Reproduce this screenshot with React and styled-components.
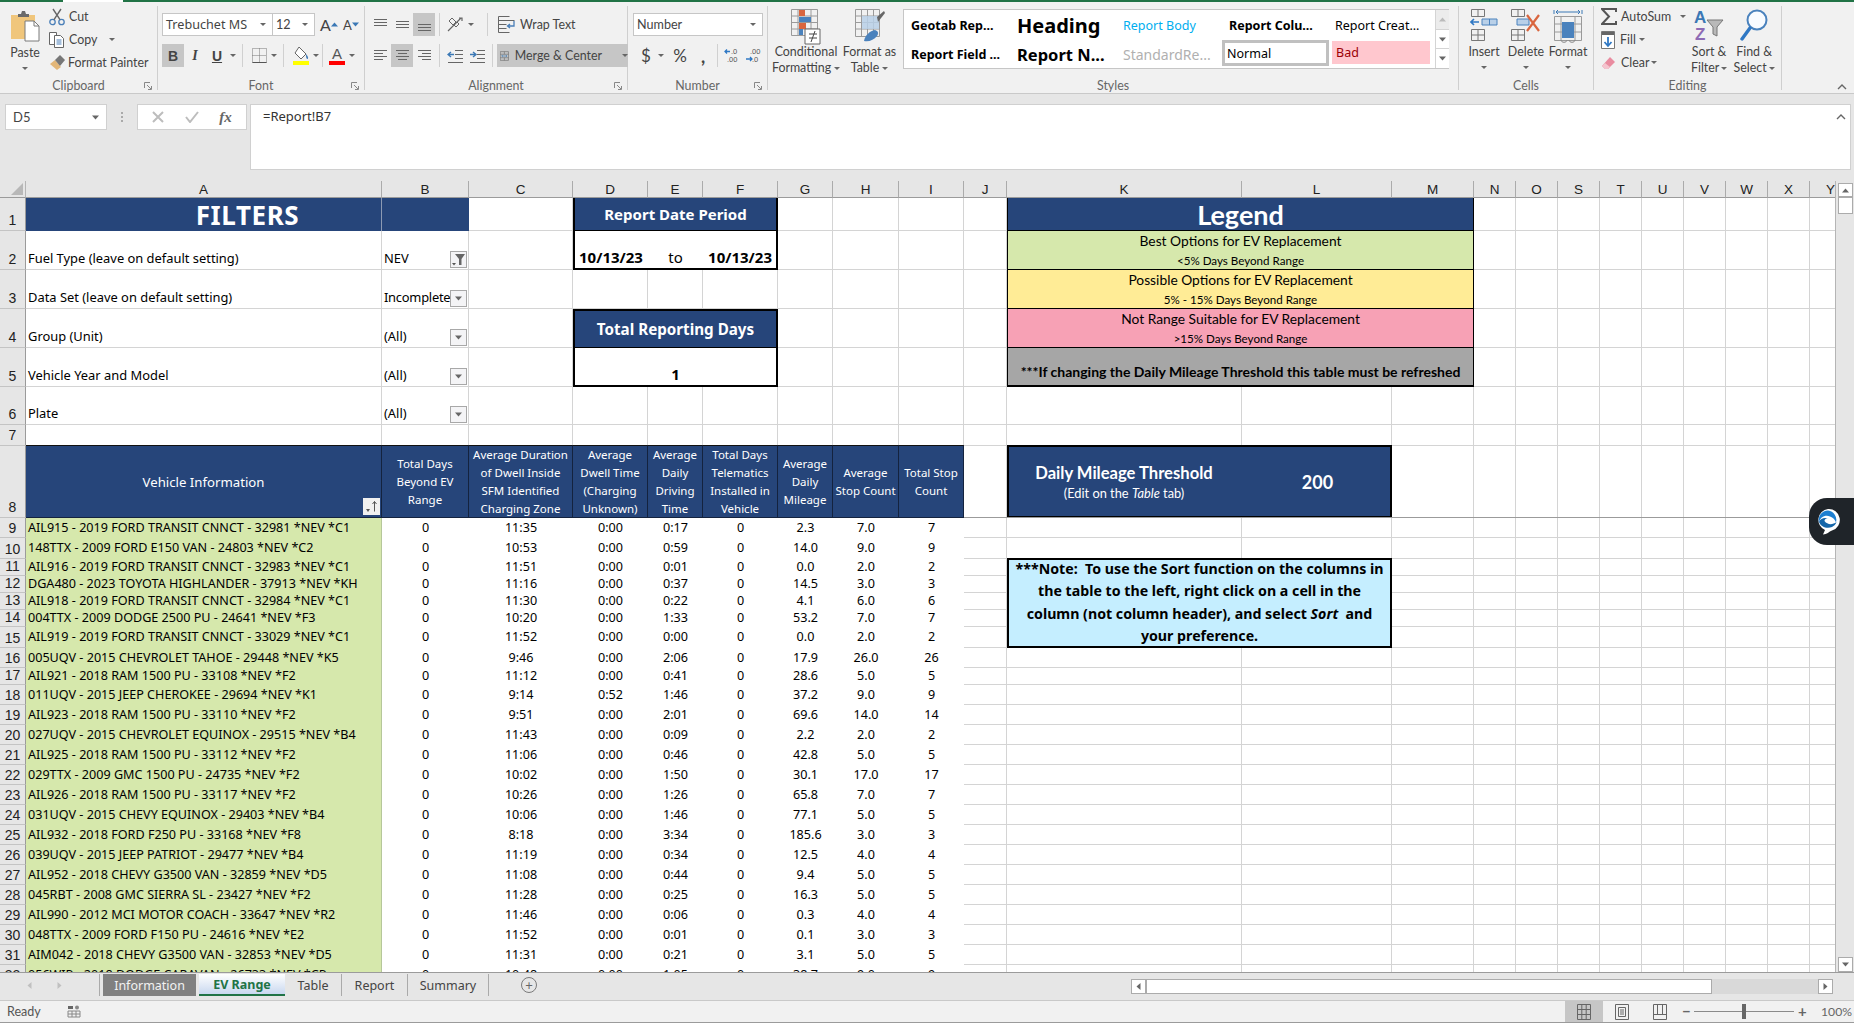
import React from "react"
import styled, { createGlobalStyle } from "styled-components"

const UI = `"Lato", "Noto Sans", sans-serif`
const SHEET = `"Noto Sans", "Open Sans", sans-serif`
const NARROW = `"Lato", "Open Sans", sans-serif`
const NAVY = "#26457a"
const GRID = "#d4d4d4"

const COLS = [
  ["A", 356], ["B", 87], ["C", 104], ["D", 75], ["E", 55], ["F", 75], ["G", 55], ["H", 66], ["I", 65], ["J", 43],
  ["K", 235], ["L", 150], ["M", 82], ["N", 42], ["O", 42], ["S", 42], ["T", 42], ["U", 42], ["V", 42], ["W", 42], ["X", 42], ["Y", 42],
]
const ROW_HEIGHTS = [33, 39, 39, 39, 39, 38, 21, 72, 20, 21, 17, 17, 17, 17, 21, 20, 17, 20, 20, 20, 20, 20, 20, 20, 20, 20, 20, 20, 20, 20, 20, 20]

const DATA = `AIL915 - 2019 FORD TRANSIT CNNCT - 32981 *NEV *C1|0|11:35|0:00|0:17|0|2.3|7.0|7
148TTX - 2009 FORD E150 VAN - 24803 *NEV *C2|0|10:53|0:00|0:59|0|14.0|9.0|9
AIL916 - 2019 FORD TRANSIT CNNCT - 32983 *NEV *C1|0|11:51|0:00|0:01|0|0.0|2.0|2
DGA480 - 2023 TOYOTA HIGHLANDER - 37913 *NEV *KH|0|11:16|0:00|0:37|0|14.5|3.0|3
AIL918 - 2019 FORD TRANSIT CNNCT - 32984 *NEV *C1|0|11:30|0:00|0:22|0|4.1|6.0|6
004TTX - 2009 DODGE 2500 PU - 24641 *NEV *F3|0|10:20|0:00|1:33|0|53.2|7.0|7
AIL919 - 2019 FORD TRANSIT CNNCT - 33029 *NEV *C1|0|11:52|0:00|0:00|0|0.0|2.0|2
005UQV - 2015 CHEVROLET TAHOE - 29448 *NEV *K5|0|9:46|0:00|2:06|0|17.9|26.0|26
AIL921 - 2018 RAM 1500 PU - 33108 *NEV *F2|0|11:12|0:00|0:41|0|28.6|5.0|5
011UQV - 2015 JEEP CHEROKEE - 29694 *NEV *K1|0|9:14|0:52|1:46|0|37.2|9.0|9
AIL923 - 2018 RAM 1500 PU - 33110 *NEV *F2|0|9:51|0:00|2:01|0|69.6|14.0|14
027UQV - 2015 CHEVROLET EQUINOX - 29515 *NEV *B4|0|11:43|0:00|0:09|0|2.2|2.0|2
AIL925 - 2018 RAM 1500 PU - 33112 *NEV *F2|0|11:06|0:00|0:46|0|42.8|5.0|5
029TTX - 2009 GMC 1500 PU - 24735 *NEV *F2|0|10:02|0:00|1:50|0|30.1|17.0|17
AIL926 - 2018 RAM 1500 PU - 33117 *NEV *F2|0|10:26|0:00|1:26|0|65.8|7.0|7
031UQV - 2015 CHEVY EQUINOX - 29403 *NEV *B4|0|10:06|0:00|1:46|0|77.1|5.0|5
AIL932 - 2018 FORD F250 PU - 33168 *NEV *F8|0|8:18|0:00|3:34|0|185.6|3.0|3
039UQV - 2015 JEEP PATRIOT - 29477 *NEV *B4|0|11:19|0:00|0:34|0|12.5|4.0|4
AIL952 - 2018 CHEVY G3500 VAN - 32859 *NEV *D5|0|11:08|0:00|0:44|0|9.4|5.0|5
045RBT - 2008 GMC SIERRA SL - 23427 *NEV *F2|0|11:28|0:00|0:25|0|16.3|5.0|5
AIL990 - 2012 MCI MOTOR COACH - 33647 *NEV *R2|0|11:46|0:00|0:06|0|0.3|4.0|4
048TTX - 2009 FORD F150 PU - 24616 *NEV *E2|0|11:52|0:00|0:01|0|0.1|3.0|3
AIM042 - 2018 CHEVY G3500 VAN - 32853 *NEV *D5|0|11:31|0:00|0:21|0|3.1|5.0|5
056WIP - 2018 DODGE CARAVAN - 26733 *NEV *CP|0|10:48|0:00|1:05|0|38.7|9.0|9`.split("\n").map(l => l.split("|"))

const FILTERS = [
  [2, "Fuel Type (leave on default setting)", "NEV", true],
  [3, "Data Set (leave on default setting)", "Incomplete"],
  [4, "Group (Unit)", "(All)"],
  [5, "Vehicle Year and Model", "(All)"],
  [6, "Plate", "(All)"],
]

const HEADERS = [
  ["B", "Total Days\nBeyond EV\nRange"],
  ["C", "Average Duration\nof Dwell Inside\nSFM Identified\nCharging Zone"],
  ["D", "Average\nDwell Time\n(Charging\nUnknown)"],
  ["E", "Average\nDaily\nDriving\nTime"],
  ["F", "Total Days\nTelematics\nInstalled in\nVehicle"],
  ["G", "Average\nDaily\nMileage"],
  ["H", "Average\nStop Count"],
  ["I", "Total Stop\nCount"],
]

const GlobalStyle = createGlobalStyle`
  html, body { margin: 0; padding: 0; background: #e6e6e6; overflow: hidden; }
  * { box-sizing: border-box; }
`

const Window = styled.div`
  width: 1854px;
  height: 1023px;
  display: flex;
  flex-direction: column;
  overflow: hidden;
  font-family: ${UI};
  color: #444;
`

const TitleStrip = styled.div`
  height: 2px;
  flex: none;
  background: #217346;
  padding-left: 63px;
  span { display: block; width: 60px; height: 2px; background: #fff; }
`

const Ribbon = styled.div`
  height: 92px;
  flex: none;
  display: flex;
  padding-top: 4px;
  background: #f1f1f1;
  border-bottom: 1px solid #c9c9c9;
  position: relative;
`

const Group = styled.div`
  width: ${p => p.$w}px;
  height: 84px;
  flex: none;
  display: flex;
  flex-direction: column;
  border-right: ${p => (p.$last ? "none" : "1px solid #cfcfcf")};
  position: relative;
`

const GroupBody = styled.div`
  flex: 1;
  display: flex;
  padding: ${p => p.$pad || "7px 0 0 4px"};
  min-height: 0;
`

const GroupLabel = styled.div`
  height: 14px;
  line-height: 14px;
  margin-bottom: -3px;
  font-size: 12.4px;
  color: #666;
  text-align: center;
`

const Launcher = styled.svg`
  position: absolute;
  right: 5px;
  bottom: 0;
  width: 8px;
  height: 8px;
`

const Col = styled.div`
  display: flex;
  flex-direction: column;
  gap: ${p => p.$gap || 0}px;
  margin-left: ${p => p.$ml || 0}px;
  margin-top: ${p => p.$mt || 0}px;
`

const Row = styled.div`
  display: flex;
  align-items: center;
  height: ${p => p.$h || 23}px;
  gap: ${p => p.$gap || 0}px;
`

const Caret = styled.i`
  display: inline-block;
  flex: none;
  width: 0;
  height: 0;
  border-left: 3px solid transparent;
  border-right: 3px solid transparent;
  border-top: 3px solid #666;
  margin-left: ${p => p.$ml || 0}px;
  vertical-align: middle;
`

const Sep = styled.b`
  display: block;
  flex: none;
  width: 1px;
  height: 23px;
  background: #d0d0d0;
  margin: 0 ${p => p.$m || 4}px;
`

const ToolBtn = styled.div`
  width: ${p => p.$w || 22}px;
  height: 23px;
  flex: none;
  display: flex;
  align-items: center;
  justify-content: center;
  background: ${p => (p.$on ? "#c6c6c6" : "transparent")};
  font-size: 14px;
  color: #444;
  white-space: nowrap;
`

const SmallCmd = styled.div`
  height: 23px;
  display: flex;
  align-items: center;
  font-size: 12.4px;
  white-space: nowrap;
  svg { flex: none; margin-right: ${p => p.$gap || 4}px; }
`

const BigCmd = styled.div`
  width: ${p => p.$w}px;
  flex: none;
  display: flex;
  flex-direction: column;
  align-items: center;
  font-size: 12.4px;
  line-height: 16px;
  text-align: center;
  white-space: nowrap;
  svg { display: block; margin-bottom: 3px; }
`

const IconSlot = styled.div`
  height: 35px;
  display: flex;
  align-items: flex-start;
  justify-content: center;
`

const SelectBox = styled.div`
  width: ${p => p.$w}px;
  height: 23px;
  flex: none;
  display: flex;
  align-items: center;
  justify-content: space-between;
  padding: 0 6px 0 3px;
  background: #fff;
  border: 1px solid #c6c6c6;
  font-size: 12.6px;
  color: #444;
`

const Gallery = styled.div`
  width: 546px;
  height: 60px;
  margin: -1px 0 0 ${p => p.$ml}px;
  flex: none;
  display: flex;
  background: #fff;
  border: 1px solid #c6c6c6;
`

const GalleryGrid = styled.div`
  flex: 1;
  display: grid;
  grid-template-columns: repeat(5, 106px);
  grid-template-rows: 30px 28px;
  padding-left: 1px;
`

const StyleChip = styled.div`
  display: flex;
  align-items: center;
  padding-left: ${p => p.$pl ?? 6}px;
  font-family: "Noto Sans", sans-serif;
  font-size: ${p => p.$size || 12.5}px;
  font-weight: ${p => (p.$bold ? 700 : 400)};
  color: ${p => p.$color || "#000"};
  white-space: nowrap;
  overflow: hidden;
`

const NormalChip = styled(StyleChip)`
  border: 3px solid #c0c0c0;
  margin: 0 0 0 -1px;
  padding-left: 2px;
  height: 26px;
  font-size: 12.5px;
`

const BadChip = styled(StyleChip)`
  background: #ffc7ce;
  color: #9c0006;
  height: 23px;
  margin: 1px 5px 0 3px;
  padding-left: 4px;
`

const GalleryScroll = styled.div`
  width: 14px;
  flex: none;
  display: flex;
  flex-direction: column;
  background: #fff;
  border-left: 1px solid #d4d4d4;
  div {
    flex: 1;
    display: flex;
    align-items: center;
    justify-content: center;
    border-bottom: 1px solid #d4d4d4;
  }
  div:first-child { background: #ececec; }
  div:last-child { border-bottom: none; }
`

const CollapseChevron = styled.svg`
  position: absolute;
  right: 7px;
  bottom: 3px;
  width: 10px;
  height: 6px;
`

const FormulaArea = styled.div`
  height: 87px;
  flex: none;
  display: flex;
  padding: 10px 3px 11px 5px;
  background: #e6e6e6;
`

const NameBox = styled.div`
  width: 102px;
  height: 26px;
  display: flex;
  align-items: center;
  justify-content: space-between;
  padding: 0 7px;
  background: #fff;
  border: 1px solid #d0d0d0;
  font-size: 13px;
`

const Grip = styled.div`
  width: 30px;
  height: 26px;
  display: flex;
  flex-direction: column;
  align-items: center;
  justify-content: center;
  gap: 2px;
  i { width: 2px; height: 2px; background: #aaa; }
`

const FxButtons = styled.div`
  width: 110px;
  height: 26px;
  display: flex;
  align-items: center;
  justify-content: space-around;
  padding: 0 4px;
  background: #fff;
  border: 1px solid #d0d0d0;
  em { font-family: "Liberation Serif", serif; font-size: 15px; font-weight: 700; color: #666; }
`

const FormulaInput = styled.div`
  flex: 1;
  margin-left: 3px;
  padding: 2px 12px;
  background: #fff;
  border: 1px solid #d0d0d0;
  font-family: ${SHEET};
  font-size: 13px;
  color: #333;
  position: relative;
`

const FormulaChevron = styled.svg`
  position: absolute;
  right: 4px;
  top: 9px;
  width: 10px;
  height: 6px;
`

const Workspace = styled.div`
  height: 792px;
  flex: none;
  display: flex;
  position: relative;
  background: #e6e6e6;
  border-bottom: 1px solid #9b9b9b;
`

const Viewport = styled.div`
  width: 1836px;
  flex: none;
  overflow: hidden;
  border-right: 1px solid #b5b5b5;
`

const Sheet = styled.div`
  display: grid;
  grid-template-columns: 26px ${COLS.map(c => c[1] + "px").join(" ")};
  grid-template-rows: 17px ${ROW_HEIGHTS.map(h => h + "px").join(" ")};
  background: #fff;
  font-family: ${SHEET};
  font-size: 12.6px;
  color: #000;
`

const CornerCell = styled.div`
  background: #e6e6e6;
  border-right: 1px solid #b5b5b5;
  border-bottom: 1px solid #9b9b9b;
  position: relative;
  &::after {
    content: "";
    position: absolute;
    right: 2px;
    bottom: 2px;
    border-left: 12px solid transparent;
    border-bottom: 12px solid #b8b8b8;
  }
`

const ColHead = styled.div`
  display: flex;
  align-items: center;
  justify-content: center;
  background: #e6e6e6;
  border-right: 1px solid #ababab;
  border-bottom: 1px solid #9b9b9b;
  font-family: "Liberation Sans", sans-serif;
  font-size: 13.5px;
  color: #222;
`

const RowHead = styled.div`
  display: flex;
  align-items: flex-end;
  justify-content: center;
  padding-bottom: ${p => (p.$center ? 1 : 2)}px;
  background: #e6e6e6;
  border-right: 1px solid #9b9b9b;
  border-bottom: 1px solid #c4c4c4;
  font-family: "Liberation Sans", sans-serif;
  font-size: 14px;
  color: #222;
`

const Cell = styled.div`
  grid-column: ${p => p.$c + 2} / span ${p => p.$cs || 1};
  grid-row: ${p => p.$r + 1} / span ${p => p.$rs || 1};
  min-width: 0;
  display: flex;
  position: relative;
  white-space: nowrap;
`

const BlankCell = styled(Cell)`
  border-right: 1px solid ${GRID};
  border-bottom: 1px solid ${GRID};
`

const TextCell = styled(BlankCell)`
  align-items: flex-end;
  padding: 0 2px 2px 2px;
  font-size: 12.9px;
  letter-spacing: ${p => (p.$tight ? "-0.25px" : "0")};
`

const NavyCell = styled(Cell)`
  align-items: center;
  justify-content: center;
  background: ${NAVY};
  color: #fff;
  font-weight: ${p => p.$bold ? 700 : 400};
  font-size: ${p => p.$size || 13}px;
`

const FiltersHeading = styled(NavyCell)`
  background: linear-gradient(#8c9ab3, #8c9ab3) 355px 0 / 1px 100% no-repeat, ${NAVY};
  letter-spacing: 0.6px;
`

const HeaderCell = styled(NavyCell)`
  margin-top: -1px;
  border-top: 1px solid #111;
  border-right: 1px solid #14233f;
  border-bottom: 1px solid #14233f;
  white-space: pre-line;
  text-align: center;
  line-height: 18px;
  font-size: 11.5px;
`

const VehicleHeader = styled(HeaderCell)`
  font-size: 13.2px;
`

const BoxTop = styled(NavyCell)`
  border: 2px solid #000;
  border-bottom-width: ${p => p.$bb ?? 1}px;
  border-top-width: ${p => p.$bt ?? 0}px;
`

const BoxBottom = styled(Cell)`
  align-items: flex-end;
  justify-content: ${p => p.$justify || "center"};
  padding: 0 4px 1px;
  background: #fff;
  border: 2px solid #000;
  border-top: none;
  font-size: 15px;
  font-weight: 700;
  span { font-weight: 400; }
`

const LegendRow = styled(Cell)`
  flex-direction: column;
  align-items: center;
  justify-content: ${p => p.$end ? "flex-end" : "flex-start"};
  background: ${p => p.$fill};
  border: 1px solid #000;
  border-top: none;
  border-bottom-width: ${p => p.$end ? 2 : 1}px;
  padding-bottom: ${p => p.$end ? 3 : 0}px;
  font-family: ${NARROW};
  font-size: ${p => p.$end ? 14 : 13.8}px;
  font-weight: ${p => p.$end ? 700 : 400};
  line-height: 20px;
  small { font-size: 11.6px; line-height: 19px; }
`

const LegendTitle = styled(NavyCell)`
  font-family: ${NARROW};
  font-size: 27px;
  font-weight: 700;
  border: 1px solid #000;
  border-width: 0 1px 1px 1px;
`

const ThresholdCell = styled(Cell)`
  display: grid;
  grid-template-columns: 230px 1fr;
  align-items: center;
  background: ${NAVY};
  color: #fff;
  border: 2px solid #000;
  margin-top: -1px;
  font-family: ${NARROW};
  text-align: center;
  strong { display: block; font-size: 16.6px; line-height: 22px; }
  small { display: block; font-size: 12.8px; line-height: 18px; }
  b { font-size: 18px; font-weight: 700; padding-left: 6px; }
`

const NoteCell = styled(Cell)`
  display: block;
  margin-top: -1px;
  background: #c5eeff;
  border: 2px solid #000;
  text-align: center;
  font-size: 14.2px;
  font-weight: 700;
  line-height: 22.3px;
  font-family: ${SHEET};
`

const NoteText = styled.div`
  margin-top: -2px;
`

const DataCell = styled(Cell)`
  align-items: center;
  justify-content: ${p => (p.$left ? "flex-start" : "center")};
  padding-left: ${p => (p.$left ? 2 : 0)}px;
  background: ${p => p.$fill || "#fff"};
  border-right: ${p => (p.$left ? "1px solid #b6c79a" : "none")};
  font-size: 12.6px;
  line-height: 1;
`

const DropBtn = styled.div`
  position: absolute;
  right: 1px;
  bottom: 1px;
  width: 17px;
  height: 17px;
  display: flex;
  align-items: center;
  justify-content: center;
  background: #f4f4f6;
  border: 1px solid #a8a8a8;
`

const SortBtn = styled(DropBtn)`
  bottom: 2px;
  border: none;
  background: #f0f0f0;
`

const FrozenLine = styled.div`
  position: absolute;
  left: 964px;
  right: 18px;
  top: 336px;
  height: 1px;
  background: #9b9b9b;
`

const AssistBubble = styled.div`
  position: absolute;
  right: 0;
  top: 317px;
  width: 45px;
  height: 47px;
  display: flex;
  align-items: center;
  padding-left: 7px;
  background: #1f2429;
  border-radius: 18px 0 0 18px;
`

const VScroll = styled.div`
  flex: 1;
  display: flex;
  flex-direction: column;
  align-items: center;
  padding: 2px 1px 0;
`

const ScrollArrow = styled.div`
  width: 15px;
  height: ${p => p.$h || 15}px;
  flex: none;
  display: flex;
  align-items: center;
  justify-content: center;
  background: #fff;
  border: 1px solid #ababab;
`

const ScrollThumb = styled.div`
  width: 15px;
  height: 17px;
  flex: none;
  background: #fff;
  border: 1px solid #ababab;
`

const TabBar = styled.div`
  height: 27px;
  flex: none;
  display: flex;
  align-items: flex-start;
  padding-top: 1px;
  background: #e6e6e6;
`

const TabNav = styled.div`
  width: 100px;
  height: 22px;
  flex: none;
  display: flex;
  align-items: center;
  gap: 23px;
  padding-left: 26px;
  border-right: 1px solid #aaa;
  margin-right: 3px;
`

const SheetTab = styled.div`
  width: ${p => p.$w}px;
  height: 22px;
  flex: none;
  display: flex;
  align-items: center;
  justify-content: center;
  font-family: ${SHEET};
  font-size: 12.5px;
  color: #444;
  border-right: 1px solid #aaa;
`

const DarkTab = styled(SheetTab)`
  background: #808080;
  color: #f2f2f2;
  border-right: none;
  margin-right: 3px;
`

const ActiveTab = styled(SheetTab)`
  background: linear-gradient(#ffffff, #c9d8ef);
  color: #217346;
  font-weight: 700;
  border-right: none;
  border-bottom: 2px solid #217346;
`

const AddSheet = styled.div`
  width: 16px;
  height: 16px;
  margin: 3px 0 0 32px;
  flex: none;
  border: 1px solid #7a7a7a;
  border-radius: 50%;
  display: flex;
  align-items: center;
  justify-content: center;
  font-size: 13px;
  line-height: 1;
  color: #666;
`

const HScroll = styled.div`
  margin: 5px 21px 0 auto;
  width: 702px;
  height: 15px;
  flex: none;
  display: flex;
  background: #d9d9d9;
`

const HArrow = styled.div`
  width: ${p => p.$w || 15}px;
  flex: none;
  display: flex;
  align-items: center;
  justify-content: center;
  background: #fff;
  border: 1px solid #ababab;
`

const HThumb = styled.div`
  width: 566px;
  flex: none;
  background: #fff;
  border: 1px solid #ababab;
`

const HTrack = styled.div`
  flex: 1;
`

const StatusBar = styled.div`
  height: 23px;
  flex: none;
  display: flex;
  align-items: center;
  padding: 0 5px 0 7px;
  background: #f1f1f1;
  border-top: 1px solid #c9c9c9;
  border-bottom: 1px solid #9b9b9b;
  font-size: 12.5px;
  color: #555;
`

const MacroIcon = styled.svg`
  margin-left: 26px;
  width: 14px;
  height: 13px;
`

const ViewBtn = styled.div`
  width: 38px;
  height: 21px;
  flex: none;
  display: flex;
  align-items: center;
  justify-content: center;
  background: ${p => (p.$on ? "#c6c6c6" : "transparent")};
`

const ZoomSlider = styled.div`
  display: flex;
  align-items: center;
  gap: 4px;
  margin-left: 3px;
  font-size: 15px;
  font-weight: 700;
  color: #666;
  span { width: 8px; text-align: center; line-height: 1; }
  div {
    width: 100px;
    height: 1px;
    background: #8a8a8a;
    position: relative;
  }
  div::after {
    content: "";
    position: absolute;
    left: 48px;
    top: -7px;
    width: 4px;
    height: 15px;
    background: #666;
  }
`

const ZoomValue = styled.span`
  margin-left: 15px;
  width: 28px;
  font-size: 12.2px;
  color: #666;
  white-space: nowrap;
`

const S = ({ w, h, vb, children }) => (
  <svg width={w} height={h} viewBox={vb || `0 0 ${w} ${h}`} fill="none">{children}</svg>
)

const Corner = () => (
  <Launcher viewBox="0 0 8 8" fill="none">
    <path d="M.5 6V.5H6M3 3l4 4M4 7.5h3.5V4" stroke="#888" />
  </Launcher>
)

const PasteIcon = () => (
  <S w={30} h={32}>
    <path d="M1 5h24v24H1z" fill="#f0c67c" />
    <path d="M8 4h3l1-3h3l1 3h3v3H8z" fill="#6b6b6b" />
    <path d="M15 11h9l5 5v15H15z" fill="#fff" stroke="#7a7a7a" />
    <path d="M24 11v5h5" stroke="#7a7a7a" />
  </S>
)
const CutIcon = () => (
  <S w={16} h={18}>
    <circle cx="3.5" cy="14" r="2.7" stroke="#4a7fb8" strokeWidth="1.3" />
    <circle cx="12.5" cy="14" r="2.7" stroke="#4a7fb8" strokeWidth="1.3" />
    <path d="M5 11.7L12 1M11 11.7L4 1" stroke="#666" strokeWidth="1.4" />
  </S>
)
const CopyIcon = () => (
  <S w={16} h={16}>
    <path d="M.5.5h7v12h-7z" fill="#fff" stroke="#666" />
    <path d="M5.5 3.5h6l3 3v9h-9z" fill="#fff" stroke="#666" />
    <path d="M7.5 8h5M7.5 10h5M7.5 12h5" stroke="#4a7fb8" />
  </S>
)
const PainterIcon = () => (
  <S w={16} h={16}>
    <path d="M1 9l5-4 6 7-4 3z" fill="#e3b779" />
    <path d="M6 5l5-5 5 5-5 6z" fill="#777" />
  </S>
)
const BorderIcon = () => (
  <S w={15} h={15}>
    <path d="M.5.5h14v14H.5zM7.5.5v14M.5 7.5h14" stroke="#777" strokeDasharray="1 1" />
    <path d="M.5 14.5h14" stroke="#555" />
  </S>
)
const FillIcon = () => (
  <S w={18} h={19}>
    <path d="M7 1l7 7-5 5-6-6z" fill="#fff" stroke="#666" />
    <path d="M14 8c1.5 2 2.5 3 2 4.5s-2.500 0-2-4.500z" fill="#4a7fb8" />
    <path d="M1 15h16v4H1z" fill="#ffff00" />
  </S>
)
const FontColorIcon = () => (
  <S w={18} h={19}>
    <text x="9" y="13" fontSize="15" fontFamily="Liberation Sans" textAnchor="middle" fill="#555">A</text>
    <path d="M1 15h16v4H1z" fill="#ff0000" />
  </S>
)
const Lines = ({ rows }) => (
  <S w={15} h={15}>
    {rows.map(([y, x1, x2], i) => <path key={i} d={`M${x1} ${y}.5H${x2}`} stroke="#666" />)}
  </S>
)
const OrientIcon = () => (
  <S w={18} h={17}>
    <path d="M2 15L15 2M13 2h3v3" stroke="#666" strokeWidth="1.2" />
    <path d="M3 5l3-3 4 4-3 3zM8 9l3-3 2 2-3 3z" stroke="#666" />
  </S>
)
const WrapIcon = () => (
  <S w={17} h={18}>
    <path d="M.5.5h11M.5 4.500h16M.500 8.500h8M.500 12.500h8M.5 16.500h11M.5.5v16" stroke="#666" />
    <path d="M16 5v5h-6M12 8l-2.500 2 2.500 2" stroke="#4a7fb8" strokeWidth="1.3" />
  </S>
)
const IndentIcon = ({ flip }) => (
  <S w={17} h={15}>
    <path d="M8 2.500h8M8 6.500h8M8 10.500h8M1 14.500h15" stroke="#666" />
    <path d={flip ? "M1 6.500h6M4 4l3 2.500L4 9" : "M7 6.500H1M4 4L1 6.500 4 9"} stroke="#3b78b5" strokeWidth="1.4" />
  </S>
)
const MergeIcon = () => (
  <S w={15} h={16}>
    <path d="M.5.5h14v15H.5zM.5 5h14M.5 11h14M7.500.5V5M7.500 11v4.500" stroke="#666" fill="none" />
    <path d="M3 8h9M5 6L3 8l2 2M10 6l2 2-2 2" stroke="#3b78b5" />
  </S>
)
const DecimalIcon = ({ up }) => (
  <S w={16} h={15} vb="0 0 16 15">
    <text x={up ? 7 : 5} y="6" fontSize="7.5" fontFamily="Liberation Sans" fill="#555">{up ? ".0" : ".00"}</text>
    <text x={up ? 3 : 7} y="14" fontSize="7.5" fontFamily="Liberation Sans" fill="#555">{up ? ".00" : ".0"}</text>
    <path d={up ? "M6 3.500H1M3 1.500l-2 2 2 2" : "M1 11h6M5 9l2 2-2 2"} stroke="#2f78c4" strokeWidth="1.3" />
  </S>
)
const CondFormatIcon = () => (
  <S w={30} h={36}>
    <path d="M.5.5h26v26H.5zM.5 7h26M.5 13.500h26M.5 20h26M7 .5v26M20 .5v26" stroke="#9a9a9a" />
    <path d="M8 1h6v6H8z" fill="#d9663f" />
    <path d="M8 8h12v5H8z" fill="#4a82bd" />
    <path d="M8 14h7v6H8z" fill="#d9663f" />
    <path d="M8 20h4v6H8z" fill="#4a82bd" />
    <path d="M14 20h15v15H14z" fill="#fff" stroke="#666" />
    <path d="M18 25h8M18 29h8M24 22l-4 11" stroke="#444" />
  </S>
)
const TableIcon = () => (
  <S w={30} h={36}>
    <path d="M.5.5h24v27H.5zM.5 7h24M.5 13.500h24M.5 20h24M6.500.5v27M12.500.5v27M18.500.5v27" stroke="#9a9a9a" />
    <path d="M7 7h17v13H7z" fill="#b9d0e8" opacity=".85" />
    <path d="M22 8l7-6 1 2-7 9z" fill="#666" />
    <path d="M9 32c1-6 6-10 11-11 3 1 4 3 2 6-3 4-8 6-13 5z" fill="#4a82bd" />
  </S>
)
const InsertIcon = () => (
  <S w={28} h={32}>
    <path d="M1.500.5h13v7h-13zM8 .5v7M1.500 20.500h13v11h-13zM8 20.500v11M1.500 26h13" stroke="#777" />
    <path d="M12 10h15v6H12zM19.500 10v6" fill="#b9d0e8" stroke="#4a82bd" />
    <path d="M9 13H1M4 10l-3 3 3 3" stroke="#2f78c4" strokeWidth="1.6" />
  </S>
)
const DeleteIcon = () => (
  <S w={32} h={32}>
    <path d="M1.500.5h13v7h-13zM8 .5v7M1.500 20.500h13v11h-13zM8 20.500v11M1.500 26h13" stroke="#777" />
    <path d="M7 10h12v6H7z" fill="#b9d0e8" stroke="#4a82bd" />
    <path d="M17 6l12 16M29 6L17 22" stroke="#d9663f" strokeWidth="2.2" />
  </S>
)
const FormatIcon = () => (
  <S w={30} h={36}>
    <path d="M1 1v4M29 1v4M3 3h24M5 1L3 3l2 2M25 1l2 2-2 2" stroke="#3b78b5" />
    <path d="M1.500 7.500h27v24h-27zM1.500 15h27M1.500 23h27M8 7.500v24M22 7.500v24" stroke="#9a9a9a" />
    <path d="M9 13h12v16H9z" fill="#4a82bd" />
    <path d="M8 31c0 3 6 3 6 0M16 31c0 3 6 3 6 0" stroke="#888" />
  </S>
)
const SigmaIcon = () => (
  <S w={16} h={17}>
    <path d="M15 4V1H1l7 7.500L1 16h14v-3" stroke="#555" strokeWidth="2" />
  </S>
)
const FillDownIcon = () => (
  <S w={14} h={18}>
    <path d="M.5.5h13v17H.5z" fill="#fff" stroke="#777" />
    <path d="M1 1h12v3H1z" fill="#666" />
    <path d="M7 6v9M3.500 11L7 15l3.500-4" stroke="#2f78c4" strokeWidth="1.8" />
  </S>
)
const EraserIcon = () => (
  <S w={15} h={14}>
    <path d="M9 1l5 5-7 7H4L1 10z" fill="#e98ca0" />
    <path d="M1 10l3 3h3l2-2-5-4z" fill="#f4c4ce" />
  </S>
)
const SortIcon = () => (
  <S w={32} h={32}>
    <text x="1" y="14" fontSize="17" fontWeight="700" fontFamily="Liberation Sans" fill="#3b78b5">A</text>
    <text x="2" y="31" fontSize="17" fontWeight="700" fontFamily="Liberation Sans" fill="#8e6bb5">Z</text>
    <path d="M14 11h16l-6 7v9l-4-2v-7z" fill="#b9b9b9" stroke="#777" />
  </S>
)
const FindIcon = () => (
  <S w={28} h={33}>
    <circle cx="17" cy="11" r="9.500" stroke="#4a82bd" strokeWidth="2" fill="#f8fbff" />
    <path d="M10 19L2 30" stroke="#2f78c4" strokeWidth="3.400" strokeLinecap="round" />
  </S>
)
const Triangle = ({ dir, color }) => (
  <S w={7} h={7}>
    <path d={{ up: "M0 5.500h7L3.500 1.500z", down: "M0 1.500h7L3.500 5.500z", right: "M1.500 0v7L5.500 3.500z", left: "M5.500 0v7L1.500 3.500z" }[dir]} fill={color || "#666"} />
  </S>
)
const FilterGlyph = () => (
  <S w={13} h={13}>
    <path d="M3 1h10L9.500 6v6H7V6z" fill="#666" />
    <path d="M0 10h4L2 12.500z" fill="#555" />
  </S>
)
const SortGlyph = () => (
  <S w={13} h={13}>
    <path d="M1 9h4L3 12z" fill="#555" />
    <path d="M9.500 11.500V1.500M7.500 4l2-2.500L11.500 4" stroke="#555" />
  </S>
)
const AssistIcon = () => (
  <S w={24} h={28} vb="0 0 24 28">
    <path d="M12 1a11 11 0 0 1 4 21.500c-3 1-5 4-9 4l2-4.500A11 11 0 0 1 12 1z" fill="#fff" />
    <path d="M12 2.500a9.500 9.500 0 0 0-9 12c1-5 6-8 11-6 3 1 5 3 6 6a9.500 9.500 0 0 0-8-12z" fill="#1d7fd1" />
    <path d="M3 14c2 5 8 7 13 5 2-1 4-3 4.500-5-4 3-9 3-12-1 0-2 2-3 4-2-3-2-8-1-9.500 3z" fill="#1565a8" />
  </S>
)

const gridIcon = (
  <S w={14} h={16}>
    <path d="M.5.5h13v15H.5zM.5 5.500h13M.5 10.500h13M4.800.5v15M9.200.5v15" stroke="#666" />
  </S>
)
const pageIcon = (
  <S w={14} h={16}>
    <path d="M.5.5h13v15H.5zM3.500 3.500h7v9h-7zM5 6h4M5 8h4M5 10h4" stroke="#666" />
  </S>
)
const breakIcon = (
  <S w={14} h={16}>
    <path d="M.5.5h13v15H.5zM.5 10.500h13M4.500.5v10M9.500.5v10" stroke="#666" />
  </S>
)

const Clipboard = () => (
  <Group $w={158}>
    <GroupBody $pad="4px 0 0 4px">
      <BigCmd $w={42}>
        <IconSlot><PasteIcon /></IconSlot>
        Paste
        <Caret style={{ marginTop: 6 }} />
      </BigCmd>
      <Col $ml={3} $mt={-5}>
        <SmallCmd $gap={4}><CutIcon />Cut</SmallCmd>
        <SmallCmd $gap={4}><CopyIcon />Copy<Caret $ml={12} /></SmallCmd>
        <SmallCmd $gap={3}><PainterIcon />Format Painter</SmallCmd>
      </Col>
    </GroupBody>
    <GroupLabel>Clipboard</GroupLabel>
    <Corner />
  </Group>
)

const FontGroup = () => (
  <Group $w={207}>
    <GroupBody>
      <Col $gap={8}>
        <Row>
          <SelectBox $w={111} style={{ fontFamily: SHEET }}>Trebuchet MS<Caret /></SelectBox>
          <SelectBox $w={43} style={{ marginLeft: -1 }}>12<Caret /></SelectBox>
          <ToolBtn $w={22} style={{ marginLeft: 3, fontSize: 16 }}>A<Triangle dir="up" color="#3b78b5" /></ToolBtn>
          <ToolBtn $w={22} style={{ fontSize: 13 }}>A<Triangle dir="down" color="#3b78b5" /></ToolBtn>
        </Row>
        <Row>
          <ToolBtn $on style={{ fontWeight: 700, fontFamily: "Liberation Sans" }}>B</ToolBtn>
          <ToolBtn style={{ fontStyle: "italic", fontFamily: "Liberation Serif", fontWeight: 700 }}>I</ToolBtn>
          <ToolBtn style={{ textDecoration: "underline", fontWeight: 700, fontFamily: "Liberation Sans" }}>U</ToolBtn>
          <Caret $ml={2} />
          <Sep $m={6} />
          <ToolBtn $w={20}><BorderIcon /></ToolBtn>
          <Caret $ml={2} />
          <Sep $m={6} />
          <ToolBtn $w={22}><FillIcon /></ToolBtn>
          <Caret $ml={1} />
          <Sep $m={3} />
          <ToolBtn $w={22}><FontColorIcon /></ToolBtn>
          <Caret $ml={1} />
        </Row>
      </Col>
    </GroupBody>
    <GroupLabel>Font</GroupLabel>
    <Corner />
  </Group>
)

const AlignmentGroup = () => (
  <Group $w={263}>
    <GroupBody $pad="7px 0 0 4px">
      <Col $gap={8}>
        <Row>
          <ToolBtn><Lines rows={[[2, 1, 14], [5, 1, 14], [8, 1, 14]]} /></ToolBtn>
          <ToolBtn><Lines rows={[[4, 1, 14], [7, 1, 14], [10, 1, 14]]} /></ToolBtn>
          <ToolBtn $on><Lines rows={[[7, 1, 14], [10, 1, 14], [13, 1, 14]]} /></ToolBtn>
          <Sep $m={4} />
          <ToolBtn><OrientIcon /></ToolBtn>
          <Caret $ml={2} />
          <Sep $m={13} />
          <SmallCmd $gap={5} style={{ marginLeft: -3 }}><WrapIcon />Wrap Text</SmallCmd>
        </Row>
        <Row>
          <ToolBtn><Lines rows={[[2, 1, 14], [5, 1, 10], [8, 1, 14], [11, 1, 10]]} /></ToolBtn>
          <ToolBtn $on><Lines rows={[[2, 1, 14], [5, 3, 12], [8, 1, 14], [11, 3, 12]]} /></ToolBtn>
          <ToolBtn><Lines rows={[[2, 1, 14], [5, 5, 14], [8, 1, 14], [11, 5, 14]]} /></ToolBtn>
          <Sep $m={4} />
          <ToolBtn><IndentIcon /></ToolBtn>
          <ToolBtn><IndentIcon flip /></ToolBtn>
          <Sep $m={4} />
          <ToolBtn $on $w={131} style={{ justifyContent: "flex-start", paddingLeft: 3, fontSize: 12.4, gap: 6 }}>
            <MergeIcon />Merge &amp; Center<Caret $ml={14} />
          </ToolBtn>
        </Row>
      </Col>
    </GroupBody>
    <GroupLabel>Alignment</GroupLabel>
    <Corner />
  </Group>
)

const NumberGroup = () => (
  <Group $w={140}>
    <GroupBody $pad="7px 0 0 5px">
      <Col $gap={8}>
        <SelectBox $w={130}>Number<Caret /></SelectBox>
        <Row>
          <ToolBtn style={{ fontSize: 17, marginLeft: 2 }}>$</ToolBtn>
          <Caret $ml={1} />
          <ToolBtn $w={24} style={{ fontSize: 17, marginLeft: 4 }}>%</ToolBtn>
          <ToolBtn style={{ fontSize: 18, fontWeight: 700 }}>,</ToolBtn>
          <Sep $m={3} />
          <ToolBtn $w={22}><DecimalIcon up /></ToolBtn>
          <ToolBtn $w={20}><DecimalIcon /></ToolBtn>
        </Row>
      </Col>
    </GroupBody>
    <GroupLabel>Number</GroupLabel>
    <Corner />
  </Group>
)

const StylesGroup = () => (
  <Group $w={691}>
    <GroupBody $pad="4px 0 0 4px">
      <BigCmd $w={68} style={{ marginTop: -1 }}>
        <IconSlot><CondFormatIcon /></IconSlot>
        Conditional
        <span>Formatting<Caret $ml={3} /></span>
      </BigCmd>
      <BigCmd $w={59} style={{ marginTop: -1 }}>
        <IconSlot><TableIcon /></IconSlot>
        Format as
        <span>Table<Caret $ml={3} /></span>
      </BigCmd>
      <Gallery $ml={4}>
        <GalleryGrid>
          <StyleChip $bold>Geotab Rep...</StyleChip>
          <StyleChip $bold $size={20}>Heading</StyleChip>
          <StyleChip $color="#00aeef">Report Body</StyleChip>
          <StyleChip $bold>Report Colu...</StyleChip>
          <StyleChip>Report Creat...</StyleChip>
          <StyleChip $bold>Report Field ...</StyleChip>
          <StyleChip $bold $size={16.5}>Report N...</StyleChip>
          <StyleChip $color="#b0b0b0" $size={14}>StandardRe...</StyleChip>
          <NormalChip>Normal</NormalChip>
          <BadChip>Bad</BadChip>
        </GalleryGrid>
        <GalleryScroll>
          <div><Triangle dir="up" color="#bbb" /></div>
          <div><Triangle dir="down" /></div>
          <div><Triangle dir="down" /></div>
        </GalleryScroll>
      </Gallery>
    </GroupBody>
    <GroupLabel>Styles</GroupLabel>
  </Group>
)

const CellsGroup = () => (
  <Group $w={135}>
    <GroupBody $pad="4px 0 0 4px">
      {[["Insert", <InsertIcon />], ["Delete", <DeleteIcon />], ["Format", <FormatIcon />]].map(([label, icon]) => (
        <BigCmd $w={42} key={label} style={{ marginTop: -1 }}>
          <IconSlot>{icon}</IconSlot>
          {label}
          <Caret style={{ marginTop: 6 }} />
        </BigCmd>
      ))}
    </GroupBody>
    <GroupLabel>Cells</GroupLabel>
  </Group>
)

const EditingGroup = () => (
  <Group $w={188}>
    <GroupBody $pad="4px 0 0 7px">
      <Col $mt={-5}>
        <SmallCmd $gap={4}><SigmaIcon />AutoSum<Caret $ml={9} /></SmallCmd>
        <SmallCmd $gap={5}><FillDownIcon />Fill<Caret $ml={3} /></SmallCmd>
        <SmallCmd $gap={5}><EraserIcon />Clear<Caret $ml={2} /></SmallCmd>
      </Col>
      <BigCmd $w={42} style={{ marginLeft: 2, marginTop: -1 }}>
        <IconSlot><SortIcon /></IconSlot>
        Sort &amp;
        <span>Filter<Caret $ml={2} /></span>
      </BigCmd>
      <BigCmd $w={42} style={{ marginLeft: 3, marginTop: -1 }}>
        <IconSlot><FindIcon /></IconSlot>
        Find &amp;
        <span>Select<Caret $ml={2} /></span>
      </BigCmd>
    </GroupBody>
    <GroupLabel>Editing</GroupLabel>
  </Group>
)

const colIndex = l => COLS.findIndex(c => c[0] === l)

const SheetCells = () => {
  const taken = new Set()
  const mark = (r, c, rs = 1, cs = 1) => {
    for (let i = r; i < r + rs; i++) for (let j = c; j < c + cs; j++) taken.add(i + ":" + j)
  }
  const K = colIndex("K")
  const D = colIndex("D")

  mark(1, 0, 1, 2); mark(1, D, 1, 3); mark(2, D, 1, 3); mark(4, D, 1, 3); mark(5, D, 1, 3)
  for (let r = 1; r <= 5; r++) mark(r, K, 1, 3)
  mark(8, K, 1, 2); mark(11, K, 5, 2)
  FILTERS.forEach(f => mark(f[0], 0, 1, 2))
  for (let r = 8; r <= 32; r++) mark(r, 0, 1, 9)

  const blanks = []
  ROW_HEIGHTS.forEach((_, i) => {
    COLS.forEach((_, j) => {
      if (!taken.has(i + 1 + ":" + j)) blanks.push(<BlankCell key={`b${i}-${j}`} $r={i + 1} $c={j} />)
    })
  })

  return (
    <>
      <CornerCell />
      {COLS.map(c => <ColHead key={c[0]}>{c[0]}</ColHead>)}
      {ROW_HEIGHTS.map((_, i) => (
        <RowHead key={i} style={{ gridColumn: 1, gridRow: i + 2 }} $center={i >= 8}>{i + 1}</RowHead>
      ))}
      {blanks}

      <FiltersHeading $r={1} $c={0} $cs={2} $bold $size={26}>FILTERS</FiltersHeading>
      {FILTERS.map(([r, label, value, active]) => (
        <React.Fragment key={r}>
          <TextCell $r={r} $c={0}>{label}</TextCell>
          <TextCell $r={r} $c={1} $tight={value === "Incomplete"}>
            {value}
            <DropBtn>{active ? <FilterGlyph /> : <Triangle dir="down" />}</DropBtn>
          </TextCell>
        </React.Fragment>
      ))}

      <BoxTop $r={1} $c={D} $cs={3} $bold $size={15}>Report Date Period</BoxTop>
      <BoxBottom $r={2} $c={D} $cs={3} $justify="space-between">10/13/23<span>to</span>10/13/23</BoxBottom>
      <BoxTop $r={4} $c={D} $cs={3} $bt={2} $bold $size={15.2}>Total Reporting Days</BoxTop>
      <BoxBottom $r={5} $c={D} $cs={3}>1</BoxBottom>

      <LegendTitle $r={1} $c={K} $cs={3}>Legend</LegendTitle>
      <LegendRow $r={2} $c={K} $cs={3} $fill="#d6e8ac">Best Options for EV Replacement<small>&lt;5% Days Beyond Range</small></LegendRow>
      <LegendRow $r={3} $c={K} $cs={3} $fill="#ffec96">Possible Options for EV Replacement<small>5% - 15% Days Beyond Range</small></LegendRow>
      <LegendRow $r={4} $c={K} $cs={3} $fill="#f7a1b5">Not Range Suitable for EV Replacement<small>&gt;15% Days Beyond Range</small></LegendRow>
      <LegendRow $r={5} $c={K} $cs={3} $fill="#a6a6a6" $end>***If changing the Daily Mileage Threshold this table must be refreshed</LegendRow>

      <VehicleHeader $r={8} $c={0}>
        Vehicle Information
        <SortBtn><SortGlyph /></SortBtn>
      </VehicleHeader>
      {HEADERS.map(([col, text]) => <HeaderCell key={col} $r={8} $c={colIndex(col)}>{text}</HeaderCell>)}

      <ThresholdCell $r={8} $c={K} $cs={2}>
        <div>
          <strong>Daily Mileage Threshold</strong>
          <small>(Edit on the <em>Table</em> tab)</small>
        </div>
        <b>200</b>
      </ThresholdCell>

      <NoteCell $r={11} $c={K} $cs={2} $rs={5}>
        <NoteText>
          ***Note:&nbsp; To use the Sort function on the columns in<br />
          the table to the left, right click on a cell in the<br />
          column (not column header), and select <em>Sort</em>&nbsp; and<br />
          your preference.
        </NoteText>
      </NoteCell>

      {DATA.map((row, i) => (
        <React.Fragment key={i}>
          {row.map((value, j) => (
            <DataCell key={j} $r={i + 9} $c={j} $left={j === 0} $fill={j === 0 ? "#d6e8ac" : undefined}>{value}</DataCell>
          ))}
        </React.Fragment>
      ))}
    </>
  )
}

export default function App() {
  return (
    <Window>
      <GlobalStyle />
      <TitleStrip><span /></TitleStrip>
      <Ribbon>
        <Clipboard />
        <FontGroup />
        <AlignmentGroup />
        <NumberGroup />
        <StylesGroup />
        <CellsGroup />
        <EditingGroup />
        <CollapseChevron viewBox="0 0 10 6" fill="none"><path d="M1 5l4-4 4 4" stroke="#666" strokeWidth="1.4" /></CollapseChevron>
      </Ribbon>

      <FormulaArea>
        <NameBox>D5<Triangle dir="down" /></NameBox>
        <Grip><i /><i /><i /></Grip>
        <FxButtons>
          <S w={12} h={12}><path d="M1 1l10 10M11 1L1 11" stroke="#bdbdbd" strokeWidth="2" /></S>
          <S w={14} h={12}><path d="M1 6l4 5 8-10" stroke="#bdbdbd" strokeWidth="2" /></S>
          <em>fx</em>
        </FxButtons>
        <FormulaInput>
          =Report!B7
          <FormulaChevron viewBox="0 0 10 6" fill="none"><path d="M1 5l4-4 4 4" stroke="#666" strokeWidth="1.4" /></FormulaChevron>
        </FormulaInput>
      </FormulaArea>

      <Workspace>
        <Viewport>
          <Sheet><SheetCells /></Sheet>
        </Viewport>
        <VScroll>
          <ScrollArrow $h={14}><Triangle dir="up" /></ScrollArrow>
          <ScrollThumb />
          <ScrollArrow $h={15} style={{ marginTop: "auto" }}><Triangle dir="down" /></ScrollArrow>
        </VScroll>
        <FrozenLine />
        <AssistBubble><AssistIcon /></AssistBubble>
      </Workspace>

      <TabBar>
        <TabNav><Triangle dir="left" color="#c0c0c0" /><Triangle dir="right" color="#c0c0c0" /></TabNav>
        <DarkTab $w={93}>Information</DarkTab>
        <ActiveTab $w={86}>EV Range</ActiveTab>
        <SheetTab $w={57}>Table</SheetTab>
        <SheetTab $w={66}>Report</SheetTab>
        <SheetTab $w={81}>Summary</SheetTab>
        <AddSheet>+</AddSheet>
        <HScroll>
          <HArrow><Triangle dir="left" /></HArrow>
          <HThumb />
          <HTrack />
          <HArrow><Triangle dir="right" /></HArrow>
        </HScroll>
      </TabBar>

      <StatusBar>
        Ready
        <MacroIcon viewBox="0 0 14 13" fill="none"><path d="M1 1h5v3H1z" fill="#666" /><path d="M1 6h12v6H1zM5 6v6M9 6v6M1 9h12" stroke="#888" /><circle cx="10" cy="2.500" r="2" fill="#888" /></MacroIcon>
        <ViewBtn $on style={{ marginLeft: "auto" }}>{gridIcon}</ViewBtn>
        <ViewBtn>{pageIcon}</ViewBtn>
        <ViewBtn>{breakIcon}</ViewBtn>
        <ZoomSlider><span>−</span><div /><span>+</span></ZoomSlider>
        <ZoomValue>100%</ZoomValue>
      </StatusBar>
    </Window>
  )
}
